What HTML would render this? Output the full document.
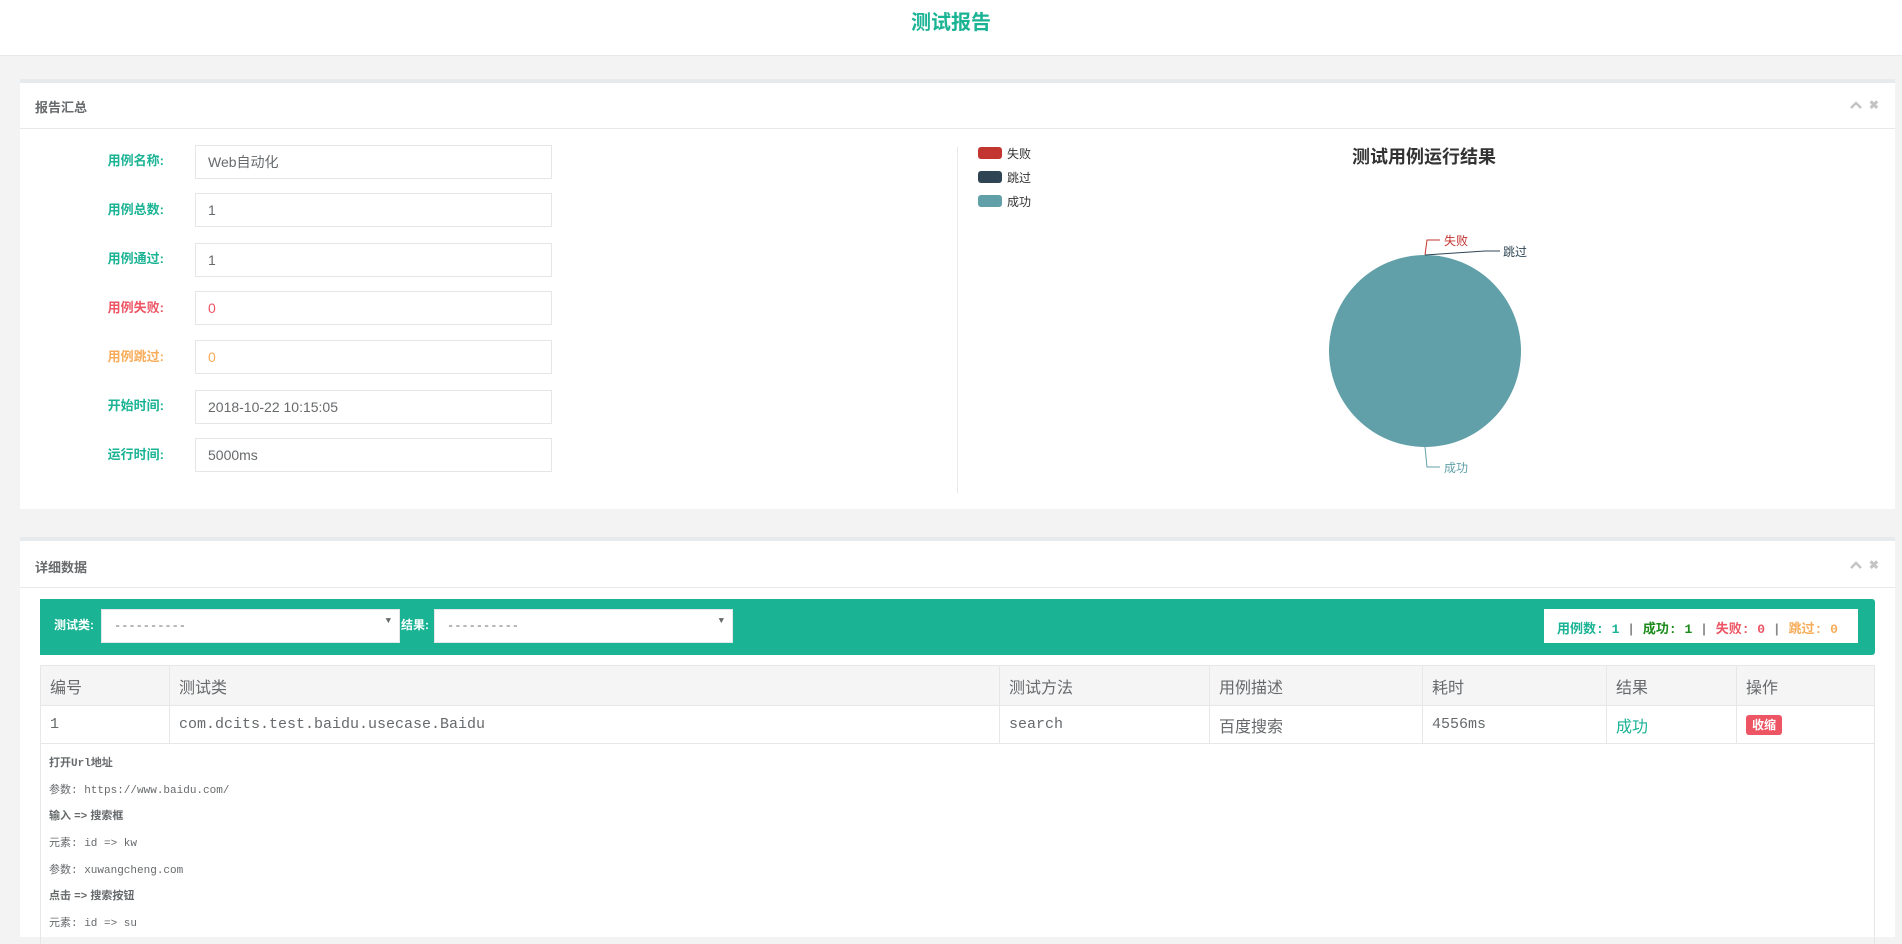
<!DOCTYPE html>
<html><head><meta charset="utf-8"><style>
*{box-sizing:border-box;margin:0;padding:0}
body{width:1902px;height:920px;overflow:hidden;background:#f3f3f4;font-family:"Liberation Sans","Noto Sans CJK SC",sans-serif;color:#676a6c;position:relative}
.abs{position:absolute}
.hdr{left:0;top:0;width:1902px;height:56px;background:#fff;border-bottom:1px solid #e7eaec;text-align:center;font-size:20px;font-weight:bold;color:#1ab394;line-height:46px}
.panel{background:#fff;border-top:4px solid #e7eaec}
.ptitle{position:absolute;left:15px;font-size:13px;font-weight:bold;color:#676a6c}
.tools{position:absolute;right:16px;font-size:12px;color:#c4c4c4;font-weight:bold}
.lbl{position:absolute;width:80px;text-align:right;font-size:13px;font-weight:bold;color:#1ab394}
.inp{position:absolute;left:195px;width:357px;height:34px;border:1px solid #e5e6e7;font-size:14px;padding:0 12px;line-height:32px;color:#676a6c}
.mono{font-family:"Liberation Mono","Noto Sans CJK SC",monospace}
table{border-collapse:collapse;position:absolute;left:40px;top:665px;width:1835px}
td,th{border:1px solid #e7e7e7;text-align:left;padding:0 9px;font-weight:normal;font-size:16px}
th{background:#f5f5f6;height:40px;color:#676a6c}
td{height:38px}
.det{position:absolute;left:49px;font-size:11px;color:#676a6c}
</style></head><body>
<div class="abs hdr">测试报告</div>

<div class="abs panel" style="left:20px;top:79px;width:1875px;height:430px">
 <div class="ptitle" style="top:14px">报告汇总</div>
 <div class="tools" style="top:15px"><svg width="12" height="8"><polyline points="1,7 6,2 11,7" fill="none" stroke="#c4c4c4" stroke-width="2.5"/></svg>&nbsp;&nbsp;✖</div>
 <div class="abs" style="left:0;top:45px;width:100%;height:1px;background:#e7eaec"></div>
 <div class="lbl" style="left:64px;top:67px">用例名称:</div><div class="inp" style="top:62px;left:175px">Web自动化</div>
 <div class="lbl" style="left:64px;top:116px">用例总数:</div><div class="inp" style="top:110px;left:175px">1</div>
 <div class="lbl" style="left:64px;top:165px">用例通过:</div><div class="inp" style="top:160px;left:175px">1</div>
 <div class="lbl" style="left:64px;top:214px;color:#ed5565">用例失败:</div><div class="inp" style="top:208px;left:175px;color:#ed5565">0</div>
 <div class="lbl" style="left:64px;top:263px;color:#f8ac59">用例跳过:</div><div class="inp" style="top:257px;left:175px;color:#f8ac59">0</div>
 <div class="lbl" style="left:64px;top:312px">开始时间:</div><div class="inp" style="top:307px;left:175px">2018-10-22 10:15:05</div>
 <div class="lbl" style="left:64px;top:361px">运行时间:</div><div class="inp" style="top:355px;left:175px">5000ms</div>
 <div class="abs" style="left:937px;top:64px;width:1px;height:346px;background:#e7eaec"></div>
</div>

<svg class="abs" style="left:0;top:0" width="1902" height="520">
 <rect x="978" y="147" width="24" height="12" rx="3" fill="#c23531"/>
 <rect x="978" y="171" width="24" height="12" rx="3" fill="#2f4554"/>
 <rect x="978" y="195" width="24" height="12" rx="3" fill="#61a0a8"/>
 <g font-size="12" fill="#333" font-family="Liberation Sans,Noto Sans CJK SC,sans-serif">
 <text x="1007" y="158">失败</text><text x="1007" y="182">跳过</text><text x="1007" y="206">成功</text></g>
 <text x="1424" y="163" text-anchor="middle" font-size="18" font-weight="bold" fill="#333" font-family="Liberation Sans,Noto Sans CJK SC,sans-serif">测试用例运行结果</text>
 <circle cx="1425" cy="351" r="96" fill="#61a0a8"/>
 <polyline points="1425,255 1427,240 1440,240" fill="none" stroke="#c23531"/>
 <polyline points="1425,255 1485,251 1500,251" fill="none" stroke="#2f4554"/>
 <polyline points="1425,447 1427,467 1440,467" fill="none" stroke="#61a0a8"/>
 <g font-size="12" font-family="Liberation Sans,Noto Sans CJK SC,sans-serif">
 <text x="1444" y="245" fill="#c23531">失败</text><text x="1503" y="256" fill="#2f4554">跳过</text><text x="1444" y="472" fill="#61a0a8">成功</text></g>
</svg>

<div class="abs panel" style="left:20px;top:537px;width:1875px;height:400px">
 <div class="ptitle" style="top:16px">详细数据</div>
 <div class="tools" style="top:17px"><svg width="12" height="8"><polyline points="1,7 6,2 11,7" fill="none" stroke="#c4c4c4" stroke-width="2.5"/></svg>&nbsp;&nbsp;✖</div>
 <div class="abs" style="left:0;top:46px;width:100%;height:1px;background:#e7eaec"></div>
</div>

<div class="abs" style="left:40px;top:599px;width:1835px;height:56px;background:#1ab394;border-radius:0 3px 3px 0">
 <div class="abs" style="left:14px;top:17px;color:#fff;font-size:12px;font-weight:bold">测试类:</div>
 <div class="abs mono" style="left:61px;top:10px;width:299px;height:34px;background:#fff;border:1px solid #e5e6e7;font-size:12px;padding:9px 12px;color:#676a6c">----------<span style="position:absolute;right:8px;top:6px;font-size:9px">▼</span></div>
 <div class="abs" style="left:361px;top:17px;color:#fff;font-size:12px;font-weight:bold">结果:</div>
 <div class="abs mono" style="left:394px;top:10px;width:299px;height:34px;background:#fff;border:1px solid #e5e6e7;font-size:12px;padding:9px 12px;color:#676a6c">----------<span style="position:absolute;right:8px;top:6px;font-size:9px">▼</span></div>
 <div class="abs mono" style="left:1504px;top:10px;width:314px;height:34px;background:#fff;font-size:13px;font-weight:bold;padding:9px 0 0 13px;white-space:nowrap;overflow:hidden">
 <span style="color:#1ab394">用例数: 1</span> <span style="color:#888">|</span> <span style="color:#1b8c1b">成功: 1</span> <span style="color:#888">|</span> <span style="color:#ed5565">失败: 0</span> <span style="color:#888">|</span> <span style="color:#f8ac59">跳过: 0</span></div>
</div>

<table>
<tr><th style="width:129px">编号</th><th style="width:830px">测试类</th><th style="width:210px">测试方法</th><th style="width:213px">用例描述</th><th style="width:184px">耗时</th><th style="width:130px">结果</th><th>操作</th></tr>
<tr><td class="mono" style="font-size:15px">1</td><td class="mono" style="font-size:15px">com.dcits.test.baidu.usecase.Baidu</td><td class="mono" style="font-size:15px">search</td><td>百度搜索</td><td class="mono" style="font-size:15px">4556ms</td><td style="color:#1ab394">成功</td><td><span style="background:#ed5565;color:#fff;font-size:12px;font-weight:bold;padding:3px 6px;border-radius:3px">收缩</span></td></tr>
<tr><td colspan="7" style="height:200px;border-bottom:none"></td></tr>
</table>
<div class="det" style="top:754px;font-weight:bold">打开<span class="mono">Url</span>地址</div>
<div class="det mono" style="top:781px">参数: https://www.baidu.com/</div>
<div class="det" style="top:807px;font-weight:bold">输入 <span class="mono">=&gt;</span> 搜索框</div>
<div class="det mono" style="top:834px">元素: id =&gt; kw</div>
<div class="det mono" style="top:861px">参数: xuwangcheng.com</div>
<div class="det" style="top:887px;font-weight:bold">点击 <span class="mono">=&gt;</span> 搜索按钮</div>
<div class="det mono" style="top:914px">元素: id =&gt; su</div>
</body></html>
